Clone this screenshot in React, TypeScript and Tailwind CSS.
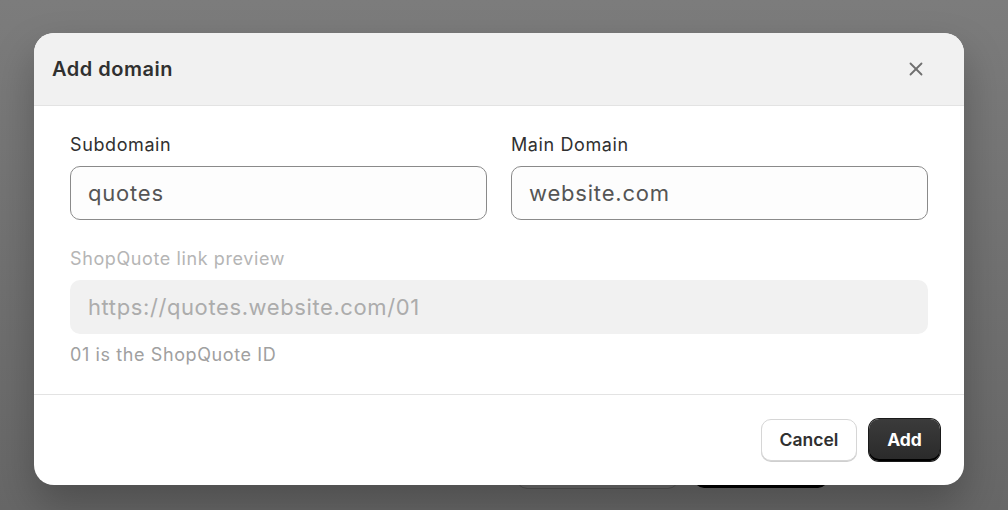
import { X } from "lucide-react";

const font = { fontFamily: "Inter, 'Noto Sans', sans-serif" };

export default function App() {
  return (
    <div className="relative h-[510px] w-[1008px] overflow-hidden bg-gradient-to-b from-[#7c7c7c] to-[#676767]" style={font}>
      {/* page content behind the overlay */}
      <div className="flex h-full items-end gap-4 pb-[22px] pl-[517px]">
        <div className="h-[40px] w-[161px] rounded-[10px] bg-[#6c6c6c] shadow-[0_1px_0_#555]" />
        <div className="h-[40px] w-[134px] rounded-[10px] bg-black" />
      </div>

      {/* modal */}
      <div className="absolute inset-0 pl-[34px] pt-[33px]">
        <div className="flex w-[930px] flex-col overflow-hidden rounded-[20px] bg-white shadow-[0_20px_40px_rgba(0,0,0,0.25)]">
          <div className="flex h-[73px] items-center justify-between border-b border-[#e3e3e3] bg-[#f1f1f1] pl-[18px] pr-[37px]">
            <h2 className="text-[20px] font-semibold tracking-[0.5px] text-[#303030]">Add domain</h2>
            <X className="h-[22px] w-[22px] text-[#6f6f6f]" strokeWidth={2} />
          </div>

          <div className="flex flex-col px-[36px] pb-[27px] pt-[27px]">
            <div className="grid grid-cols-2 gap-[24px]">
              <div className="flex flex-col gap-[9px]">
                <label className="text-[18px] leading-[24px] tracking-[0.6px] text-[#303030]">Subdomain</label>
                <div className="flex h-[54px] items-center rounded-[10px] border border-[#8a8a8a] bg-[#fdfdfd] px-[17px] text-[22px] tracking-[0.8px] text-[#555]">
                  quotes
                </div>
              </div>
              <div className="flex flex-col gap-[9px]">
                <label className="text-[18px] leading-[24px] tracking-[0.6px] text-[#303030]">Main Domain</label>
                <div className="flex h-[54px] items-center rounded-[10px] border border-[#8a8a8a] bg-[#fdfdfd] px-[17px] text-[22px] tracking-[0.8px] text-[#555]">
                  website.com
                </div>
              </div>
            </div>

            <div className="mt-[27px] flex flex-col gap-[9px]">
              <label className="text-[18px] leading-[24px] tracking-[0.6px] text-[#b5b5b5]">ShopQuote link preview</label>
              <div className="flex h-[54px] items-center rounded-[10px] bg-[#f1f1f1] px-[18px] text-[22px] tracking-[0.6px] text-[#acacac]">
                https://quotes.website.com/01
              </div>
              <p className="text-[18px] leading-[24px] tracking-[0.6px] text-[#a0a0a0]">01 is the ShopQuote ID</p>
            </div>
          </div>

          <div className="flex h-[91px] items-center justify-end gap-[12px] border-t border-[#e3e3e3] pr-[24px]">
            <button className="h-[42px] w-[96px] rounded-[10px] border border-[#d6d6d6] bg-white text-[17.5px] font-semibold text-[#303030] shadow-[0_1px_0_#cfcfcf]">
              Cancel
            </button>
            <button className="h-[42px] w-[71px] rounded-[10px] bg-gradient-to-b from-[#3b3b3b] to-[#2a2a2a] text-[17.5px] font-bold text-white shadow-[inset_0_-2px_0_#000,0_0_0_1px_#1a1a1a]">
              Add
            </button>
          </div>
        </div>
      </div>
    </div>
  );
}
